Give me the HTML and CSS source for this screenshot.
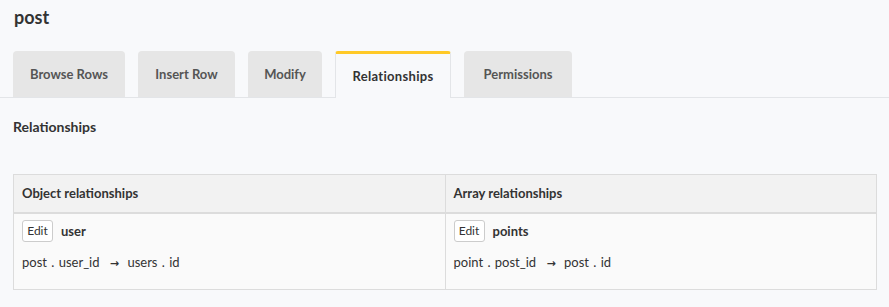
FILE: index.html
```html
<!DOCTYPE html>
<html>
	<head>
		<meta charset="utf-8" />
		<title>post - Relationships</title>
		<link rel="stylesheet" href="styles.css">
	</head>
	<body>
		<div class="page">
			<h2 class="title">post</h2>
			<ul class="tabs">
				<li class="tab">Browse Rows</li>
				<li class="tab">Insert Row</li>
				<li class="tab">Modify</li>
				<li class="tab active">Relationships</li>
				<li class="tab">Permissions</li>
			</ul>
			<div class="content">
				<h4 class="subtitle">Relationships</h4>
				<table class="rel">
					<thead>
						<tr>
							<th>Object relationships</th>
							<th>Array relationships</th>
						</tr>
					</thead>
					<tbody>
						<tr>
							<td>
								<div class="relName"><button class="editBtn">Edit</button><b>user</b></div>
								<div class="relMap">post . user_id <span class="arrow">&rarr;</span> users . id</div>
							</td>
							<td>
								<div class="relName"><button class="editBtn">Edit</button><b>points</b></div>
								<div class="relMap">point . post_id <span class="arrow">&rarr;</span> post . id</div>
							</td>
						</tr>
					</tbody>
				</table>
			</div>
		</div>
	</body>
</html>
```

FILE: styles.css
```css
*{
	margin: 0;
	padding: 0;
	box-sizing: border-box;
}
body{
	background-color: #f8f9fb;
	font-family: "Lato", "Open Sans", sans-serif;
	color: #333;
}
.page{
	padding: 6px 0 0 0;
}
.title{
	font-size: 18px;
	font-weight: bold;
	padding-left: 14px;
	line-height: 22px;
	height: 45px;
}
ul li{
	list-style: none;
}
.tabs{
	display: flex;
	gap: 13px;
	padding-left: 13px;
	border-bottom: 1px solid #e3e5e8;
	height: 47px;
}
.tab{
	height: 46px;
	background-color: #e6e6e6;
	border-radius: 4px 4px 0 0;
	font-size: 13px;
	font-weight: bold;
	color: #555;
	display: flex;
	align-items: center;
	justify-content: center;
}
.tab:nth-child(1){ width: 112px; }
.tab:nth-child(2){ width: 97px; }
.tab:nth-child(3){ width: 74px; }
.tab:nth-child(4){ width: 116px; }
.tab:nth-child(5){ width: 108px; }
.tab.active{
	height: 47px;
	background-color: #f8f9fb;
	color: #333;
	border: 1px solid #e3e5e8;
	border-bottom: none;
	border-top: 3px solid #ffc927;
	padding-bottom: 1px;
	border-radius: 3px 3px 0 0;
	letter-spacing: 0.3px;
}
.content{
	padding: 0 12px 0 13px;
}
.subtitle{
	font-size: 14px;
	font-weight: bold;
	padding-top: 20px;
	line-height: 17px;
	height: 76px;
}
.rel{
	width: 864px;
	border-collapse: collapse;
	border: 1px solid #dcdcdc;
	font-size: 13px;
}
.rel th{
	background-color: #f2f2f2;
	text-align: left;
	height: 38px;
	padding: 0 8px;
	border: 1px solid #dcdcdc;
	border-bottom: 2px solid #dcdcdc;
	font-weight: bold;
	width: 50%;
}
.rel td{
	background-color: #fafafa;
	vertical-align: top;
	padding: 6px 8px 0 8px;
	height: 77px;
	border: 1px solid #dcdcdc;
}
.relName{
	display: flex;
	align-items: center;
	gap: 8px;
	height: 22px;
}
.editBtn{
	font-family: inherit;
	font-size: 12px;
	color: #333;
	background-color: #fff;
	border: 1px solid #ccc;
	border-radius: 3px;
	height: 22px;
	width: 31px;
}
.relMap{
	padding-top: 12px;
	line-height: 16px;
	word-spacing: 1px;
}
.arrow{
	font-family: "DejaVu Sans", sans-serif;
	font-size: 11px;
	font-weight: bold;
	margin: 0 4px 0 6px;
}
```
